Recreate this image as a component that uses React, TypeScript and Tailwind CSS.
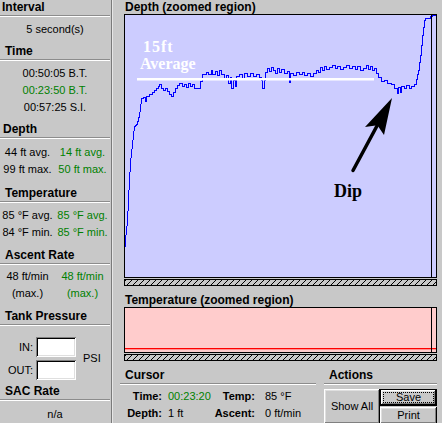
import React from 'react';

// descent portion of the dive, drawn as a plain line
const descent: [number, number][] = [
  [125.5, 247], [126, 240], [127, 230], [128, 222], [129, 200], [130, 180], [131, 163],
  [132, 152], [133, 146], [134, 134], [135, 127], [136, 125], [138, 124], [138.5, 121],
  [139.5, 117], [140.5, 112], [141, 108], [142, 99],
];

// sampled depth as steps: at x the value changes to y
const steps: [number, number][] = [
  [142, 98], [144, 97], [146, 101], [147, 96], [150, 94], [153, 92], [155, 90], [157, 88],
  [159, 86], [160, 84], [162, 88], [164, 90], [166, 88], [168, 91], [170, 94], [172, 96],
  [174, 92], [176, 88], [178, 85], [180, 83], [183, 86], [185, 84], [187, 87], [189, 83],
  [191, 86], [193, 84], [195, 88], [201, 81], [203, 74], [207, 72], [209, 74], [212, 70],
  [213, 74], [216, 71], [218, 75], [220, 70], [222, 74], [225, 78], [227, 75], [229, 83],
  [231, 77], [232, 88], [234, 80], [236, 86], [237, 76], [240, 74], [243, 78], [245, 73],
  [248, 76], [251, 73], [254, 76], [257, 74], [260, 77], [262, 80], [263, 88], [265, 80],
  [266, 72], [268, 68], [270, 71], [272, 67], [274, 70], [276, 73], [278, 68], [280, 72],
  [282, 69], [285, 73], [288, 71], [290, 82], [291, 73], [294, 75], [297, 72], [300, 74],
  [303, 72], [305, 75], [308, 73], [311, 76], [314, 73], [317, 70], [319, 72], [321, 67],
  [323, 70], [325, 66], [327, 69], [330, 67], [333, 65], [336, 68], [338, 66], [341, 69],
  [344, 67], [347, 65], [350, 68], [353, 66], [356, 69], [358, 66], [361, 70], [364, 68],
  [367, 65], [369, 69], [371, 66], [373, 70], [375, 68], [377, 73], [379, 77], [382, 81],
  [385, 80], [388, 83], [392, 84], [395, 88], [398, 93], [399, 87], [401, 92], [402, 86],
  [405, 88], [407, 85], [410, 88], [412, 86], [415, 84], [417, 79], [418, 74], [419, 70],
  [420, 62], [421, 55], [422, 45], [423, 35], [424, 27], [425, 20], [426, 18], [431, 16],
  [433, 15], [437, 15],
];

function depthPath() {
  const pts: string[] = descent.map(([x, y]) => `${x + 0.5},${y + 0.5}`);
  let prev = descent[descent.length - 1][1];
  for (const [x, y] of steps) {
    pts.push(`${x + 0.5},${prev + 0.5}`);
    pts.push(`${x + 0.5},${y + 0.5}`);
    prev = y;
  }
  return pts.join(' ');
}

const raised =
  'bg-[#c8c8c8] shadow-[inset_-1px_-1px_0_#000,inset_1px_1px_0_#fff,inset_-2px_-2px_0_#808080,inset_2px_2px_0_#dfdfdf]';
const sunken =
  'bg-white shadow-[inset_1px_1px_0_#808080,inset_-1px_-1px_0_#fff,inset_2px_2px_0_#000,inset_-2px_-2px_0_#dfdfdf]';

function Etched({ w = 'w-[110px]' }: { w?: string }) {
  return <div className={`mt-px h-0 border-t border-b border-t-[#8c8c8c] border-b-white ${w}`} />;
}

function Header({ children, className = '' }: { children: React.ReactNode; className?: string }) {
  return <div className={`h-[14px] leading-[14px] text-[12px] font-bold ${className}`}>{children}</div>;
}

function Row({ children, green = false }: { children: React.ReactNode; green?: boolean }) {
  return (
    <div className={`h-[17px] leading-[17px] text-[11px] text-center w-[110px] ${green ? 'text-[#008000]' : ''}`}>
      {children}
    </div>
  );
}

function Pair({ a, b }: { a: string; b: string }) {
  return (
    <div className="grid grid-cols-2 w-[110px] h-[17px] leading-[17px] text-[11px] text-center">
      <span>{a}</span>
      <span className="text-[#008000]">{b}</span>
    </div>
  );
}

function HatchBar() {
  const lines = [];
  for (let x = -3; x < 313; x += 6) {
    lines.push(<line key={x} x1={x} y1={6} x2={x + 5} y2={1} />);
  }
  return (
    <svg width={313} height={7} className="block ml-[11px] mt-px">
      <defs>
        <clipPath id="hclip">
          <rect x={1} y={1} width={311} height={5} />
        </clipPath>
      </defs>
      <rect x={0.5} y={0.5} width={312} height={6} fill="#c8c8c8" stroke="#000" />
      <g stroke="#000" strokeWidth={1} clipPath="url(#hclip)">
        {lines}
      </g>
    </svg>
  );
}

function Sidebar() {
  return (
    <div className="w-[112px] shrink-0 border-r border-r-[#7a7a7a]">
      <Header className="pl-[2px]">Interval</Header>
      <Etched />
      <div className="pt-[4px]">
        <Row>5 second(s)</Row>
      </div>

      <Header className="mt-[6px] pl-[5px]">Time</Header>
      <Etched />
      <div className="pt-[4px]">
        <Row>00:50:05 B.T.</Row>
        <Row green>00:23:50 B.T.</Row>
        <Row>00:57:25 S.I.</Row>
      </div>

      <Header className="mt-[6px] pl-[3px]">Depth</Header>
      <Etched />
      <div className="pt-[5px]">
        <Pair a="44 ft avg." b="14 ft avg." />
        <Pair a="99 ft max." b="50 ft max." />
      </div>

      <Header className="mt-[8px] pl-[5px]">Temperature</Header>
      <Etched />
      <div className="pt-[4px]">
        <Pair a="85 °F avg." b="85 °F avg." />
        <Pair a="84 °F min." b="85 °F min." />
      </div>

      <Header className="mt-[7px] pl-[5px]">Ascent Rate</Header>
      <Etched />
      <div className="pt-[3px]">
        <Pair a="48 ft/min" b="48 ft/min" />
        <Pair a="(max.)" b="(max.)" />
      </div>

      <Header className="mt-[7px] pl-[5px]">Tank Pressure</Header>
      <Etched />
      <div className="pt-[11px] flex items-center text-[11px]">
        <div className="flex flex-col gap-[3px]">
          <div className="flex items-center h-[20px]">
            <span className="w-[33px] text-right">IN:</span>
            <div className={`ml-[3px] w-[40px] h-[20px] ${sunken}`} />
          </div>
          <div className="flex items-center h-[20px]">
            <span className="w-[33px] text-right">OUT:</span>
            <div className={`ml-[3px] w-[40px] h-[20px] ${sunken}`} />
          </div>
        </div>
        <span className="ml-[7px]">PSI</span>
      </div>

      <Header className="mt-[4px] pl-[5px]">SAC Rate</Header>
      <Etched />
      <div className="pt-[5px]">
        <Row>n/a</Row>
      </div>
    </div>
  );
}

function DepthChart() {
  return (
    <div className="relative ml-[11px] w-[313px] h-[264px] border border-black bg-[#ccccff]">
      <svg className="absolute left-0 top-0" width={311} height={262} viewBox="126 15 311 262">
        <polyline points={depthPath()} fill="none" stroke="#0000ff" strokeWidth={1} shapeRendering="crispEdges" />
        <rect x={138} y={78} width={237} height={2.5} fill="#ffffff" />
        <line x1={432.5} y1={15} x2={432.5} y2={277} stroke="#000" strokeWidth={1} />
        <line x1={354} y1={170.5} x2={379} y2={124} stroke="#000" strokeWidth={3.5} strokeLinecap="round" />
        <polygon points="393,98 366,127 378.4,125.3 385,135" fill="#000" />
      </svg>
      <span className="absolute left-[18px] top-[24px] leading-none text-[16px] font-bold tracking-[1px] text-white font-['Liberation_Serif',serif]">
        15ft
      </span>
      <span className="absolute left-[15px] top-[41px] leading-none text-[16px] font-bold text-white font-['Liberation_Serif',serif]">
        Average
      </span>
      <span className="absolute left-[209px] top-[167px] leading-none text-[18px] font-bold text-black font-['Liberation_Serif',serif]">
        Dip
      </span>
    </div>
  );
}

function TempChart() {
  return (
    <div className="relative ml-[11px] w-[313px] h-[46px] border border-black bg-[#ffcccc]">
      <svg className="absolute left-0 top-0" width={311} height={44} viewBox="126 308 311 44">
        <rect x={126} y={348} width={311} height={1.3} fill="#ff0000" />
        <line x1={432.5} y1={308} x2={432.5} y2={352} stroke="#000" strokeWidth={1} />
      </svg>
    </div>
  );
}

function Cursor() {
  return (
    <div className="w-[196px]">
      <Header className="pl-[5px]">Cursor</Header>
      <Etched w="w-[196px]" />
      <div className="pt-[3px] text-[11px]">
        <div className="flex h-[17px] leading-[17px]">
          <span className="w-[42px] text-right font-bold">Time:</span>
          <span className="ml-[6px] w-[43px] text-[#008000]">00:23:20</span>
          <span className="w-[44px] text-right font-bold">Temp:</span>
          <span className="ml-[10px]">85 °F</span>
        </div>
        <div className="flex h-[17px] leading-[17px]">
          <span className="w-[42px] text-right font-bold">Depth:</span>
          <span className="ml-[6px] w-[43px]">1 ft</span>
          <span className="w-[44px] text-right font-bold">Ascent:</span>
          <span className="ml-[10px]">0 ft/min</span>
        </div>
      </div>
    </div>
  );
}

function Actions() {
  return (
    <div className="ml-[8px] w-[113px]">
      <Header className="pl-[5px]">Actions</Header>
      <Etched w="w-[113px]" />
      <div className="pt-[4px] flex text-[11px]">
        <button className={`w-[56px] h-[35px] flex items-center justify-center ${raised}`}>Show All</button>
        <div className="flex flex-col w-[57px]">
          <button className={`h-[17px] border border-black flex items-center justify-center p-[2px] ${raised}`}>
            <span className="w-full h-full flex items-center justify-center border border-dotted border-black leading-none">
              Save
            </span>
          </button>
          <button className={`mt-px h-[17px] flex items-center justify-center ${raised}`}>Print</button>
        </div>
      </div>
    </div>
  );
}

export default function App() {
  return (
    <div className="w-[442px] h-[423px] overflow-hidden flex bg-[#c8c8c8] text-black font-['Liberation_Sans',Arial,sans-serif]">
      <Sidebar />
      <div className="w-px shrink-0 bg-[#e6e6e6]" />
      <div className="flex-1">
        <Header className="pl-[12px]">Depth (zoomed region)</Header>
        <DepthChart />
        <HatchBar />
        <Header className="mt-[7px] pl-[12px]">Temperature (zoomed region)</Header>
        <TempChart />
        <HatchBar />
        <div className="mt-[7px] ml-[7px] flex">
          <Cursor />
          <Actions />
        </div>
      </div>
    </div>
  );
}
